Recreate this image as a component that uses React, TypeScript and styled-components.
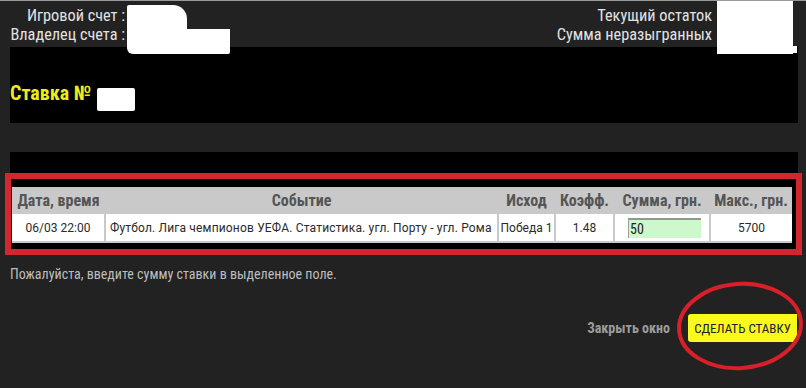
import React from "react";
import styled, { createGlobalStyle } from "styled-components";

const GlobalStyle = createGlobalStyle`
  html, body {
    margin: 0;
    padding: 0;
    background: #222222;
  }
  body {
    font-family: "Roboto Condensed", "Roboto", "Liberation Sans", sans-serif;
  }
  * { box-sizing: border-box; }
`;

const Page = styled.div`
  position: relative;
  width: 806px;
  height: 388px;
  overflow: hidden;
  background: #222222;
  border-top: 1px solid #9a9a9a;
`;

const InfoBar = styled.div`
  display: flex;
  justify-content: space-between;
  height: 46px;
`;

const InfoLabels = styled.div<{ $width?: number; $pr?: number }>`
  display: flex;
  flex-direction: column;
  align-items: flex-end;
  width: ${(p) => (p.$width ? `${p.$width}px` : "auto")};
  padding-top: 5px;
  padding-right: ${(p) => p.$pr ?? 0}px;
  color: #e2e2e2;
  font-size: 16.3px;
  line-height: 19px;
  white-space: nowrap;
`;

const Redact = styled.div<{ $l: number; $t: number; $w: number; $h: number; $r?: string }>`
  position: absolute;
  left: ${(p) => p.$l}px;
  top: ${(p) => p.$t}px;
  width: ${(p) => p.$w}px;
  height: ${(p) => p.$h}px;
  background: #ffffff;
  border-radius: ${(p) => p.$r ?? "0"};
`;

const TitlePanel = styled.div`
  display: flex;
  align-items: flex-end;
  height: 76px;
  margin: 0 8px 0 10px;
  padding-bottom: 19px;
  background: #000000;
`;

const Title = styled.h1`
  margin: 0;
  color: #ebeb1e;
  font-size: 20px;
  line-height: 22px;
  font-weight: 700;
`;

const Spacer = styled.div<{ $h: number }>`
  height: ${(p) => p.$h}px;
`;

const BlackBar = styled.div`
  height: 21px;
  margin: 0 8px 0 10px;
  background: #000000;
`;

const BetBox = styled.div`
  width: 797px;
  margin-left: 5px;
  border: 6px solid #d4262e;
  background: #000000;
  padding: 8px 4px 6px 1px;
`;

const Table = styled.table`
  width: 780px;
  border-collapse: collapse;
  table-layout: fixed;
  background: #c9c9c9;
`;

const Th = styled.th`
  height: 27px;
  padding: 0;
  color: #555555;
  font-size: 16px;
  font-weight: 700;
  text-align: center;
  white-space: nowrap;
`;

const Td = styled.td<{ $first?: boolean; $align?: "left" | "center" }>`
  height: 28px;
  padding: 0 ${(p) => (p.$align === "left" ? "4px" : "0")};
  background: #ffffff;
  background-clip: padding-box;
  border-left: ${(p) => (p.$first ? "0" : "2px solid #c9c9c9")};
  border-bottom: 2px solid #c9c9c9;
  color: #2a2a2a;
  font-family: "Roboto", "Liberation Sans", sans-serif;
  font-stretch: normal;
  font-size: 12px;
  text-align: ${(p) => p.$align ?? "center"};
  white-space: nowrap;
  overflow: hidden;
`;

const EventCell = styled(Td)`
  letter-spacing: 0.17px;
`;

const AmountCell = styled(Td)`
  padding-left: 13px;
`;

const AmountInput = styled.input`
  display: block;
  width: 73px;
  height: 20px;
  margin: 0;
  padding: 0 1px;
  border: 0;
  border-top: 2px solid #8e9a8e;
  border-left: 1px solid #9aa39a;
  background: #ccf8cc;
  color: #222222;
  font-family: "Roboto Condensed", "Roboto", sans-serif;
  font-size: 14px;
  outline: none;
`;

const Message = styled.p`
  margin: 10px 0 0 10px;
  color: #bdbdbd;
  font-size: 14px;
  line-height: 18px;
`;

const Footer = styled.div`
  display: flex;
  justify-content: flex-end;
  align-items: center;
  gap: 18px;
  margin-top: 31px;
  padding-right: 9px;
`;

const CloseLink = styled.span`
  color: #9c9c9c;
  font-size: 14px;
  font-weight: 700;
`;

const SubmitButton = styled.button`
  width: 109px;
  height: 28px;
  padding: 0;
  border: 0;
  border-radius: 3px 0 0 3px;
  background: #f9f91a;
  color: #222222;
  font-family: "Roboto Condensed", "Roboto", sans-serif;
  font-size: 13px;
  text-transform: uppercase;
  cursor: pointer;
`;

const Ring = styled.svg`
  position: absolute;
  left: 674px;
  top: 278px;
  width: 132px;
  height: 94px;
  pointer-events: none;
`;

const cols = [93, 393, 57, 59, 96, 82];

export default function App() {
  return (
    <>
      <GlobalStyle />
      <Page>
        <InfoBar>
          <InfoLabels $width={125}>
            <span>Игровой счет :</span>
            <span>Владелец счета :</span>
          </InfoLabels>
          <InfoLabels $pr={94}>
            <span>Текущий остаток</span>
            <span>Сумма неразыгранных</span>
          </InfoLabels>
        </InfoBar>
        <TitlePanel>
          <Title>Ставка №</Title>
        </TitlePanel>
        <Spacer $h={29} />
        <BlackBar />
        <BetBox>
          <Table>
            <colgroup>
              {cols.map((w, i) => (
                <col key={i} width={w} />
              ))}
            </colgroup>
            <thead>
              <tr>
                <Th>Дата, время</Th>
                <Th>Событие</Th>
                <Th>Исход</Th>
                <Th>Коэфф.</Th>
                <Th>Сумма, грн.</Th>
                <Th>Макс., грн.</Th>
              </tr>
            </thead>
            <tbody>
              <tr>
                <Td $first>06/03 22:00</Td>
                <EventCell $align="left">
                  Футбол. Лига чемпионов УЕФА. Статистика. угл. Порту - угл. Рома
                </EventCell>
                <Td>Победа 1</Td>
                <Td>1.48</Td>
                <AmountCell $align="left">
                  <AmountInput defaultValue="50" />
                </AmountCell>
                <Td>5700</Td>
              </tr>
            </tbody>
          </Table>
        </BetBox>
        <Message>Пожалуйста, введите сумму ставки в выделенное поле.</Message>
        <Footer>
          <CloseLink>Закрыть окно</CloseLink>
          <SubmitButton type="button">Сделать ставку</SubmitButton>
        </Footer>

        <Redact $l={127} $t={4} $w={60} $h={26} $r="2px 14px 0 0" />
        <Redact $l={127} $t={28} $w={103} $h={25} $r="0 0 2px 6px" />
        <Redact $l={717} $t={0} $w={76} $h={53} />
        <Redact $l={793} $t={45} $w={4} $h={7} />
        <Redact $l={97} $t={87} $w={38} $h={23} $r="2px" />

        <Ring viewBox="0 0 132 94">
          <ellipse
            cx="66"
            cy="47"
            rx="61"
            ry="42"
            fill="none"
            stroke="#d81f2a"
            strokeWidth="4"
            transform="rotate(-4 66 47)"
          />
        </Ring>
      </Page>
    </>
  );
}
